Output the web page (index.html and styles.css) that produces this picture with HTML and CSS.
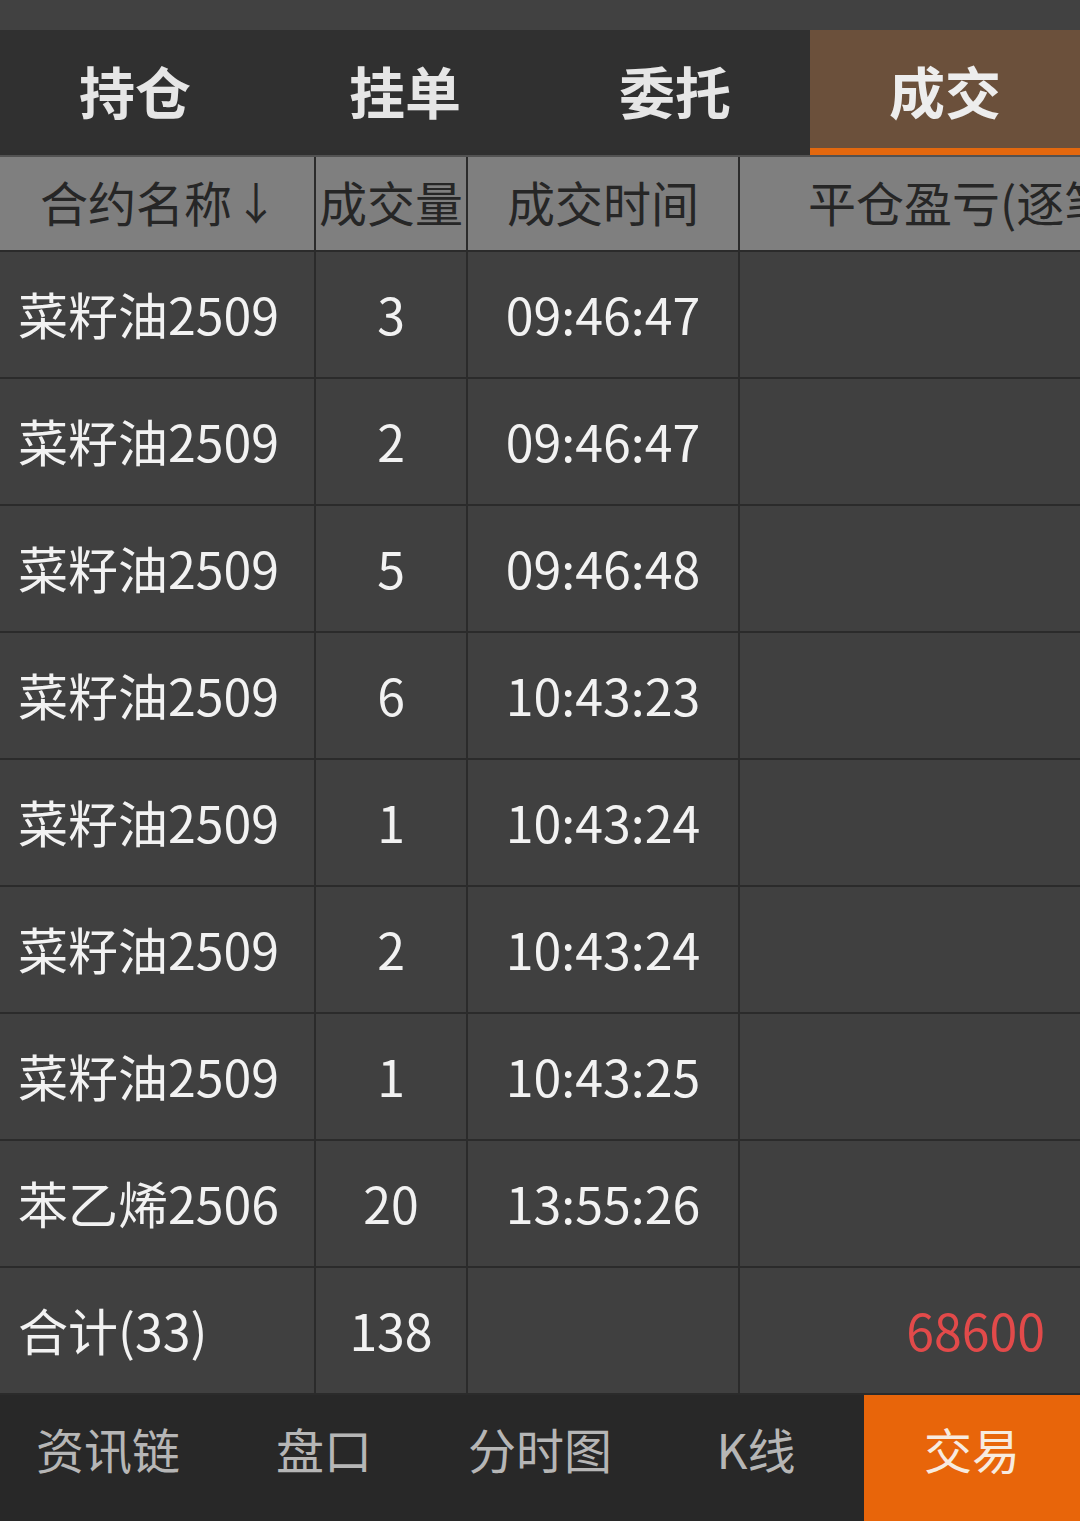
FILE: index.html
```html
<!DOCTYPE html>
<html lang="zh-CN">
<head>
<meta charset="utf-8">
<title>成交</title>
<link rel="stylesheet" href="styles.css">
</head>
<body>
<div class="app">
  <div class="status"></div>
  <div class="tabs">
    <div class="tab">持仓</div>
    <div class="tab">挂单</div>
    <div class="tab">委托</div>
    <div class="tab active">成交</div>
  </div>
  <div class="sep"></div>
  <div class="table">
    <div class="row head">
      <div class="cell c1 hname">合约名称<span class="arrow">↓</span></div>
      <div class="cell c2">成交量</div>
      <div class="cell c3">成交时间</div>
      <div class="cell c4 hpl">平仓盈亏(逐笔)</div>
    </div>
    <div class="row"><div class="cell c1 name">菜籽油2509</div><div class="cell c2">3</div><div class="cell c3">09:46:47</div><div class="cell c4"></div></div>
    <div class="row"><div class="cell c1 name">菜籽油2509</div><div class="cell c2">2</div><div class="cell c3">09:46:47</div><div class="cell c4"></div></div>
    <div class="row"><div class="cell c1 name">菜籽油2509</div><div class="cell c2">5</div><div class="cell c3">09:46:48</div><div class="cell c4"></div></div>
    <div class="row"><div class="cell c1 name">菜籽油2509</div><div class="cell c2">6</div><div class="cell c3">10:43:23</div><div class="cell c4"></div></div>
    <div class="row"><div class="cell c1 name">菜籽油2509</div><div class="cell c2">1</div><div class="cell c3">10:43:24</div><div class="cell c4"></div></div>
    <div class="row"><div class="cell c1 name">菜籽油2509</div><div class="cell c2">2</div><div class="cell c3">10:43:24</div><div class="cell c4"></div></div>
    <div class="row"><div class="cell c1 name">菜籽油2509</div><div class="cell c2">1</div><div class="cell c3">10:43:25</div><div class="cell c4"></div></div>
    <div class="row"><div class="cell c1 name">苯乙烯2506</div><div class="cell c2">20</div><div class="cell c3">13:55:26</div><div class="cell c4"></div></div>
    <div class="row total"><div class="cell c1 name">合计(33)</div><div class="cell c2">138</div><div class="cell c3"></div><div class="cell c4 pl">68600</div></div>
  </div>
  <div class="nav">
    <div class="nav-item">资讯链</div>
    <div class="nav-item">盘口</div>
    <div class="nav-item">分时图</div>
    <div class="nav-item">K线</div>
    <div class="nav-item active">交易</div>
  </div>
</div>
</body>
</html>
```
FILE: styles.css
```css
* { box-sizing: border-box; }
html, body {
  margin: 0;
  padding: 0;
  background: #404040;
}
body {
  width: 1080px;
  height: 1521px;
  overflow: hidden;
  font-family: "Noto Sans CJK SC", "Noto Sans", sans-serif;
}
.app {
  display: flex;
  flex-direction: column;
  height: 1521px;
}
.status {
  height: 30px;
  background: #414141;
}
.tabs {
  display: flex;
  height: 125px;
  background: #303030;
}
.tab {
  flex: 1;
  display: flex;
  align-items: center;
  justify-content: center;
  font-size: 56px;
  font-weight: 700;
  color: #e6e6e6;
  border-bottom: 7px solid transparent;
}
.tab.active {
  background: #6b503b;
  border-bottom-color: #e3680f;
  color: #ededed;
}
.sep {
  height: 2px;
  background: #525252;
}
.table {
  display: flex;
  flex-direction: column;
  overflow: hidden;
}
.row {
  display: grid;
  grid-template-columns: 316px 152px 272px 340px;
  height: 127px;
  border-bottom: 2px solid #2b2b2b;
  background: #404040;
  color: #f2f2f2;
  font-size: 50px;
}
.row.head {
  height: 95px;
  background: #7f7f7f;
  color: #262626;
  font-size: 48px;
}
.cell {
  display: flex;
  align-items: center;
  justify-content: center;
  border-right: 2px solid #2b2b2b;
  white-space: nowrap;
  overflow: hidden;
  padding-bottom: 4px;
}
.row.head .cell { padding-bottom: 6px; }
.cell.c4 { border-right: none; }
.cell.name {
  justify-content: flex-start;
  padding-left: 18px;
}
.hname {
  justify-content: flex-start;
  padding-left: 40px;
}
.arrow {
  font-size: 44px;
  margin-left: 2px;
}
.hpl {
  justify-content: flex-start;
  padding-left: 68px;
}
.pl {
  justify-content: flex-end;
  padding-right: 35px;
  color: #e24a4a;
}
.nav {
  display: flex;
  height: 126px;
  background: #282828;
}
.nav-item {
  flex: 1;
  display: flex;
  align-items: center;
  justify-content: center;
  font-size: 48px;
  color: #b6b6b6;
  padding-bottom: 20px;
}
.nav-item.active {
  background: #e8650a;
  color: #f7ebe0;
}
```
